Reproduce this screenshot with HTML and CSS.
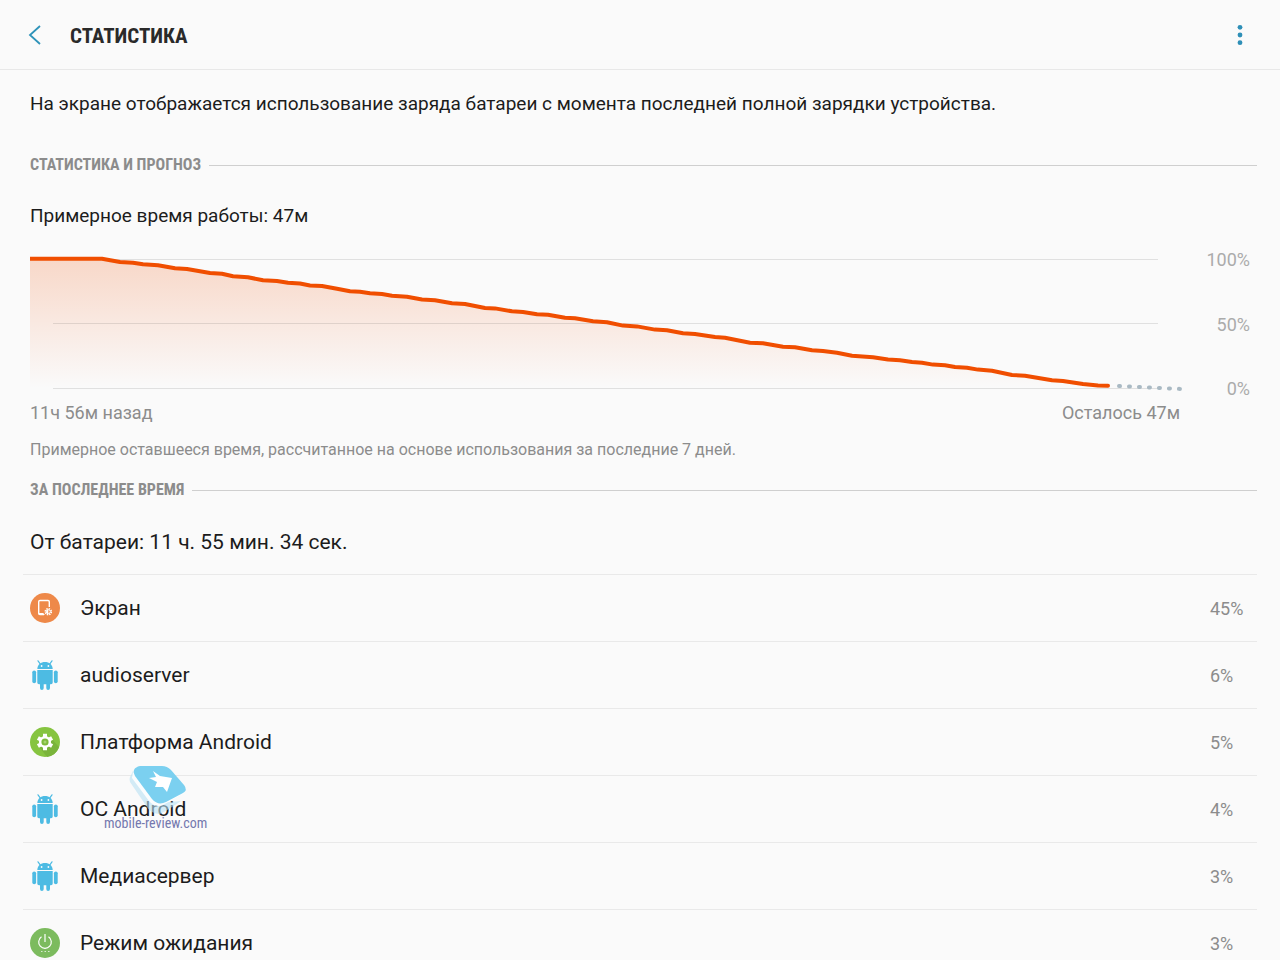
FILE: index.html
```html
<!doctype html>
<html lang="ru">
<head>
  <meta charset="UTF-8">
  <title>Статистика</title>
  <meta name="viewport" content="width=device-width, initial-scale=1">
  <link rel="stylesheet" href="styles.css">
</head>
<body>
  <svg class="defs" aria-hidden="true">
    <symbol id="android" viewBox="0 0 30 30">
      <path d="M8 0.8 L10 3.6 M22 0.8 L20 3.6" stroke="#4dbbe3" stroke-width="1.2" stroke-linecap="round"/>
      <path d="M7.3 8.9 C7.6 4.6 10.8 2 15 2 C19.2 2 22.4 4.6 22.7 8.9 Z" fill="#4dbbe3"/>
      <circle cx="11.6" cy="6" r="0.9" fill="#fafafa"/>
      <circle cx="18.4" cy="6" r="0.9" fill="#fafafa"/>
      <path d="M7.3 10 H22.7 V22.5 Q22.7 24.3 21 24.3 H20 V28 Q20 30 18.1 30 Q16.3 30 16.3 28 V24.3 H13.7 V28 Q13.7 30 11.9 30 Q10 30 10 28 V24.3 H9 Q7.3 24.3 7.3 22.5 Z" fill="#4dbbe3"/>
      <rect x="2.3" y="10.4" width="3.8" height="12.8" rx="1.9" fill="#4dbbe3"/>
      <rect x="23.9" y="10.4" width="3.8" height="12.8" rx="1.9" fill="#4dbbe3"/>
    </symbol>
  </svg>

  <header class="topbar">
    <button class="back" type="button" aria-label="Назад">
      <svg width="14" height="20" viewBox="0 0 14 20"><path d="M12 1 L2 10 L12 19" fill="none" stroke="#2e93b9" stroke-width="1.8"/></svg>
    </button>
    <h1>СТАТИСТИКА</h1>
    <button class="more" type="button" aria-label="Ещё">
      <svg width="6" height="22" viewBox="0 0 6 22" fill="#2e8fb7"><circle cx="3" cy="3.3" r="2.4"/><circle cx="3" cy="11" r="2.4"/><circle cx="3" cy="18.7" r="2.4"/></svg>
    </button>
  </header>

  <main class="content">
    <p class="intro">На экране отображается использование заряда батареи с момента последней полной зарядки устройства.</p>

    <section>
      <h2>СТАТИСТИКА И ПРОГНОЗ</h2>
      <p class="estimate">Примерное время работы: 47м</p>
      <div class="chart">
        <svg class="plot" viewBox="0 0 1152 140" preserveAspectRatio="none" aria-hidden="true">
          <defs>
            <linearGradient id="fade" x1="0" y1="0" x2="0" y2="1">
              <stop offset="0" stop-color="#f04e00" stop-opacity="0.2"/>
              <stop offset="1" stop-color="#f04e00" stop-opacity="0"/>
            </linearGradient>
            <path id="level" d="M0 4.8 H72 L90 8 L103 8.7 L113 10.3 L128 11.3 L145 14.3 L157 15 L180 19 L192 19.7 L203 22.3 L218 23.3 L233 26.3 L247 27 L258 28.7 L270 29.5 L280 31.5 L292 32 L307 34.7 L320 37.3 L330 37.7 L340 39.3 L352 40 L362 41.7 L377 42.7 L392 45.5 L405 46.3 L422 49.3 L435 50 L455 54 L465 54.4 L482 57.3 L493 58 L507 60.3 L518 60.8 L535 63.7 L545 64.3 L563 67.3 L577 68.2 L593 71.6 L607 72.4 L625 75.6 L637 76.3 L653 79.2 L665 80 L685 83 L695 83.7 L720 88.7 L733 89.3 L753 92.7 L765 93.3 L782 96.3 L793 97 L807 98.7 L822 101.7 L843 103.3 L858 105.6 L870 106.3 L882 108 L892 108.7 L903 110.6 L915 111.3 L925 113 L937 113.7 L948 115.6 L962 116.8 L982 121 L995 121.8 L1022 126.3 L1033 127 L1053 130 L1068 131.4 L1078 131.7"/>
          </defs>
          <path d="M0 4.8 H72 L145 14.3 L180 19 L203 22.3 L233 26.3 L320 37.3 L405 46.3 L482 57.3 L593 71.6 L653 79.2 L720 88.7 L782 96.3 L822 101.7 L903 110.6 L962 116.8 L1022 126.3 L1080 131.7 V134 H0 Z" fill="url(#fade)"/>
          <path d="M23 5.5 H1128 M23 69.5 H1128 M23 134.5 H1128" stroke="#000" stroke-opacity="0.1"/>
          <path d="M1089 132 L1152 135" stroke="#a9b9c3" stroke-width="4" stroke-dasharray="1 9" stroke-linecap="round"/>
          <use href="#level" fill="none" stroke="#f04e00" stroke-width="4" stroke-linejoin="round" stroke-linecap="round"/>
        </svg>
        <div class="scale">
          <span>100%</span>
          <span>50%</span>
          <span>0%</span>
        </div>
        <div class="range">
          <span>11ч 56м назад</span>
          <span>Осталось 47м</span>
        </div>
      </div>
      <p class="note">Примерное оставшееся время, рассчитанное на основе использования за последние 7 дней.</p>
    </section>

    <section>
      <h2>ЗА ПОСЛЕДНЕЕ ВРЕМЯ</h2>
      <p class="total">От батареи: 11 ч. 55 мин. 34 сек.</p>
      <ul class="usage">
        <li>
          <svg class="icon" viewBox="0 0 30 30">
            <circle cx="15" cy="15" r="15" fill="#ee8949"/>
            <path d="M14 21.5 H10 Q8.7 21.5 8.7 20.2 V8.8 Q8.7 7.5 10 7.5 H18 Q19.3 7.5 19.3 8.8 V14" fill="none" stroke="#fff" stroke-width="1.4"/>
            <path d="M8.5 20 H13 L15 22 H9 Z" fill="#fff"/>
            <circle cx="18.3" cy="18.7" r="3" fill="none" stroke="#fff" stroke-width="1.6" stroke-dasharray="1.4 0.956"/>
            <circle cx="18.3" cy="18.7" r="2" fill="none" stroke="#fff"/>
            <path d="M18.3 16.7 a2 2 0 0 0 0 4 Z" fill="#fff"/>
          </svg>
          <span class="name">Экран</span>
          <span class="percent">45%</span>
        </li>
        <li>
          <svg class="icon"><use href="#android"/></svg>
          <span class="name">audioserver</span>
          <span class="percent">6%</span>
        </li>
        <li>
          <svg class="icon" viewBox="0 0 30 30">
            <circle cx="15" cy="15" r="15" fill="#86c440"/>
            <path d="M20 10 L29 20 A15 15 0 0 1 17 30 L10 21 Z" fill="#7ab43b"/>
            <circle cx="15" cy="15" r="4.6" fill="none" stroke="#fff" stroke-width="3"/>
            <path d="M15 6.8 V10 M15 20 V23.2 M7.9 10.9 L10.7 12.5 M19.3 17.5 L22.1 19.1 M7.9 19.1 L10.7 17.5 M19.3 12.5 L22.1 10.9" stroke="#fff" stroke-width="4"/>
            <circle cx="15" cy="15" r="3.6" fill="#7ebb3c"/>
            <circle cx="15" cy="15" r="1.5" fill="#a5d46f"/>
          </svg>
          <span class="name">Платформа Android</span>
          <span class="percent">5%</span>
        </li>
        <li>
          <svg class="icon"><use href="#android"/></svg>
          <span class="name">ОС Android</span>
          <span class="percent">4%</span>
          <div class="watermark">
            <svg width="60" height="50" viewBox="0 0 60 50">
              <path d="M4 6 L1 12 Q0 14 1 17 L18 42 Q22 49 31 49 L40 44 L52 36 L30 38 Z" fill="#b9e1f3" fill-opacity="0.6"/>
              <path d="M4 7 L3 13 L20 36 Q26 43 34 40 L55 28 L57 24 L33 34 Z" fill="#fff" fill-opacity="0.9"/>
              <path d="M11 1 H33 Q38 1 42 5 L55 20 Q59 25 54 28 L37 37 Q29 41 23 34 L6 11 Q2 3 11 1 Z" fill="#7bd0f0"/>
              <path d="M24 6 L31 11 L43 13 L38 27 L34 22 L26 22 L28 17 L20 13 L27 12 Z" fill="#fff"/>
            </svg>
            <span>mobile-review.com</span>
          </div>
        </li>
        <li>
          <svg class="icon"><use href="#android"/></svg>
          <span class="name">Медиасервер</span>
          <span class="percent">3%</span>
        </li>
        <li>
          <svg class="icon" viewBox="0 0 30 30">
            <circle cx="15" cy="15" r="15" fill="#7cbb5e"/>
            <path d="M11.5 8.8 A6.3 6.3 0 1 0 18.5 8.8 M15 6 V14" fill="none" stroke="#fff" stroke-width="1.2"/>
            <path d="M11 23.5 H19.5" stroke="#fff" stroke-opacity="0.7" stroke-width="1.2" stroke-dasharray="1.5 2"/>
          </svg>
          <span class="name">Режим ожидания</span>
          <span class="percent">3%</span>
        </li>
      </ul>
    </section>
  </main>
</body>
</html>
```
FILE: styles.css
```css
* {
  box-sizing: border-box;
}

body {
  margin: 0;
  background-color: #fafafa;
  color: #1c1c1c;
  font-family: Roboto, sans-serif;
}

h1, h2, p, ul {
  margin: 0;
  padding: 0;
}

button {
  display: flex;
  align-items: center;
  justify-content: center;
  padding: 0;
  border: 0;
  background: none;
  cursor: pointer;
}

.defs {
  display: none;
}

.topbar {
  display: flex;
  align-items: center;
  height: 70px;
  padding: 0 20px;
  border-bottom: 1px solid #e8e8e8;
}

.topbar h1 {
  flex: 1;
  padding-top: 2px;
  color: #2a2a2a;
  font: bold 21px "Roboto Condensed", "Liberation Sans Narrow", Roboto, sans-serif;
}

.back {
  width: 30px;
  height: 40px;
  margin-right: 20px;
}

.more {
  width: 40px;
  height: 40px;
}

.content {
  padding: 20px 23px 0 30px;
}

.intro {
  font-size: 19px;
  line-height: 28px;
}

h2 {
  display: flex;
  align-items: center;
  gap: 8px;
  color: #8c8c8c;
  font: bold 16px/20px "Roboto Condensed", "Liberation Sans Narrow", Roboto, sans-serif;
}

h2::after {
  content: "";
  flex: 1;
  height: 1px;
  background-color: #cfcfcf;
}

.intro + section {
  margin-top: 37px;
}

.estimate {
  margin-top: 27px;
  font-size: 19px;
  line-height: 28px;
}

.chart {
  display: grid;
  grid-template-columns: 1fr 68px;
  margin-top: 24px;
  padding-right: 7px;
}

.plot {
  width: 100%;
  height: 140px;
}

.scale {
  display: flex;
  flex-direction: column;
  justify-content: space-between;
  height: 149px;
  margin: -4px 0 -5px;
  color: #ababab;
  font-size: 18px;
  line-height: 20px;
  text-align: right;
}

.range {
  display: flex;
  justify-content: space-between;
  padding: 9px 2px 0 0;
  color: #8c8c8c;
  font-size: 18px;
  line-height: 20px;
}

.note {
  margin: 15px 0 18px;
  color: #8c8c8c;
  font-size: 16px;
  line-height: 24px;
}

.total {
  margin-top: 28px;
  font-size: 21px;
  line-height: 28px;
}

.usage {
  margin: 18px 0 0 -7px;
  list-style: none;
}

.usage li {
  position: relative;
  display: flex;
  align-items: center;
  height: 67px;
  padding-left: 7px;
  border-top: 1px solid #e9e9e9;
}

.icon {
  width: 30px;
  height: 30px;
  margin-right: 20px;
}

.name {
  flex: 1;
  font-size: 21px;
}

.percent {
  width: 47px;
  color: #8c8c8c;
  font-size: 18px;
}

.watermark {
  position: absolute;
  top: -11px;
  left: 81px;
  color: #7478ae;
  font: 14px/16px "Roboto Condensed", "Liberation Sans Narrow", Roboto, sans-serif;
}

.watermark svg {
  display: block;
  margin-left: 25px;
}
```
